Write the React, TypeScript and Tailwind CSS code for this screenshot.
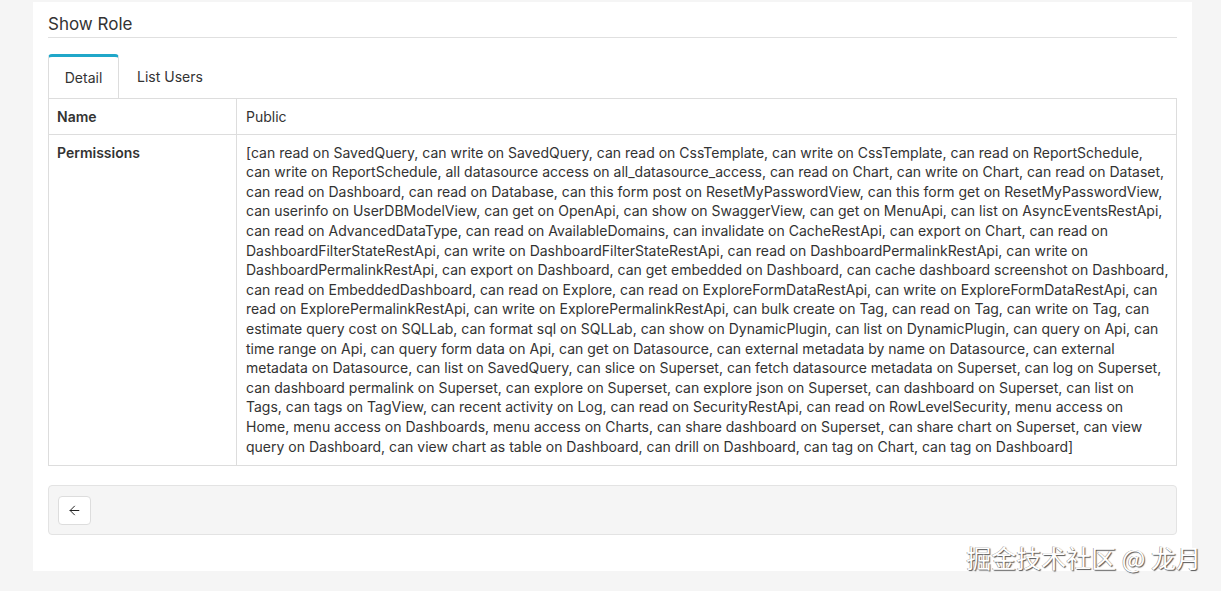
import { ArrowLeft } from 'lucide-react';

// the reference breaks the list at these exact points
const permissionLines = [
  '[can read on SavedQuery, can write on SavedQuery, can read on CssTemplate, can write on CssTemplate, can read on ReportSchedule,',
  'can write on ReportSchedule, all datasource access on all_datasource_access, can read on Chart, can write on Chart, can read on Dataset,',
  'can read on Dashboard, can read on Database, can this form post on ResetMyPasswordView, can this form get on ResetMyPasswordView,',
  'can userinfo on UserDBModelView, can get on OpenApi, can show on SwaggerView, can get on MenuApi, can list on AsyncEventsRestApi,',
  'can read on AdvancedDataType, can read on AvailableDomains, can invalidate on CacheRestApi, can export on Chart, can read on',
  'DashboardFilterStateRestApi, can write on DashboardFilterStateRestApi, can read on DashboardPermalinkRestApi, can write on',
  'DashboardPermalinkRestApi, can export on Dashboard, can get embedded on Dashboard, can cache dashboard screenshot on Dashboard,',
  'can read on EmbeddedDashboard, can read on Explore, can read on ExploreFormDataRestApi, can write on ExploreFormDataRestApi, can',
  'read on ExplorePermalinkRestApi, can write on ExplorePermalinkRestApi, can bulk create on Tag, can read on Tag, can write on Tag, can',
  'estimate query cost on SQLLab, can format sql on SQLLab, can show on DynamicPlugin, can list on DynamicPlugin, can query on Api, can',
  'time range on Api, can query form data on Api, can get on Datasource, can external metadata by name on Datasource, can external',
  'metadata on Datasource, can list on SavedQuery, can slice on Superset, can fetch datasource metadata on Superset, can log on Superset,',
  'can dashboard permalink on Superset, can explore on Superset, can explore json on Superset, can dashboard on Superset, can list on',
  'Tags, can tags on TagView, can recent activity on Log, can read on SecurityRestApi, can read on RowLevelSecurity, menu access on',
  'Home, menu access on Dashboards, menu access on Charts, can share dashboard on Superset, can share chart on Superset, can view',
  'query on Dashboard, can view chart as table on Dashboard, can drill on Dashboard, can tag on Chart, can tag on Dashboard]',
];

export default function App() {
  return (
    <div className="relative min-h-[591px] bg-[#f5f5f5] pt-[2px] pl-[33px] pr-[29px] font-['Inter',sans-serif] text-[14px] text-[#333]">
      <div className="bg-white px-[15px] pt-[11px] pb-[36px] w-[1159px]">
        {/* Header */}
        <div className="border-b border-[#e0e0e0] pb-[2px] text-[17px] leading-[22px] text-[#333]">
          Show Role
        </div>

        {/* Tabs */}
        <div className="mt-[16px] flex">
          <div className="h-[44px] w-[71px] rounded-t-[4px] border-x border-t-[3px] border-x-[#ddd] border-t-[#20a7c9] bg-white flex items-center justify-center">
            Detail
          </div>
          <div className="h-[44px] px-[18px] flex items-center pt-[1px]">List Users</div>
        </div>

        {/* Detail table */}
        <table className="w-full border-collapse border border-[#ddd] leading-[19.6px]">
          <tbody>
            <tr>
              <td className="w-[188px] border border-[#ddd] px-[8px] pt-[8px] pb-[7px] font-semibold align-top">Name</td>
              <td className="border border-[#ddd] pl-[9px] pr-[4px] pt-[8px] pb-[7px] align-top">Public</td>
            </tr>
            <tr>
              <td className="border border-[#ddd] px-[8px] pt-[8px] pb-[9px] font-semibold align-top">Permissions</td>
              <td className="border border-[#ddd] pl-[9px] pr-[4px] pt-[8px] pb-[9px] align-top">
                {permissionLines.map((line, idx) => (
                  <span key={idx} className="block whitespace-nowrap">{line}</span>
                ))}
              </td>
            </tr>
          </tbody>
        </table>

        {/* Footer well */}
        <div className="mt-[19px] h-[50px] rounded-[4px] border border-[#e3e3e3] bg-[#f5f5f5] pl-[9px] flex items-center">
          <button className="h-[29px] w-[33px] rounded-[4px] border border-[#ddd] bg-white flex items-center justify-center text-[#222]">
            <ArrowLeft size={15} strokeWidth={1.6} />
          </button>
        </div>
      </div>

      {/* Watermark */}
      <div className="absolute right-[20px] top-[541px] font-['Noto_Sans_CJK_SC',sans-serif] text-[25px] leading-[32px] text-white [text-shadow:1px_1px_1px_#555,-0.5px_-0.5px_0_#888]">
        掘金技术社区 @ 龙月
      </div>
    </div>
  );
}
